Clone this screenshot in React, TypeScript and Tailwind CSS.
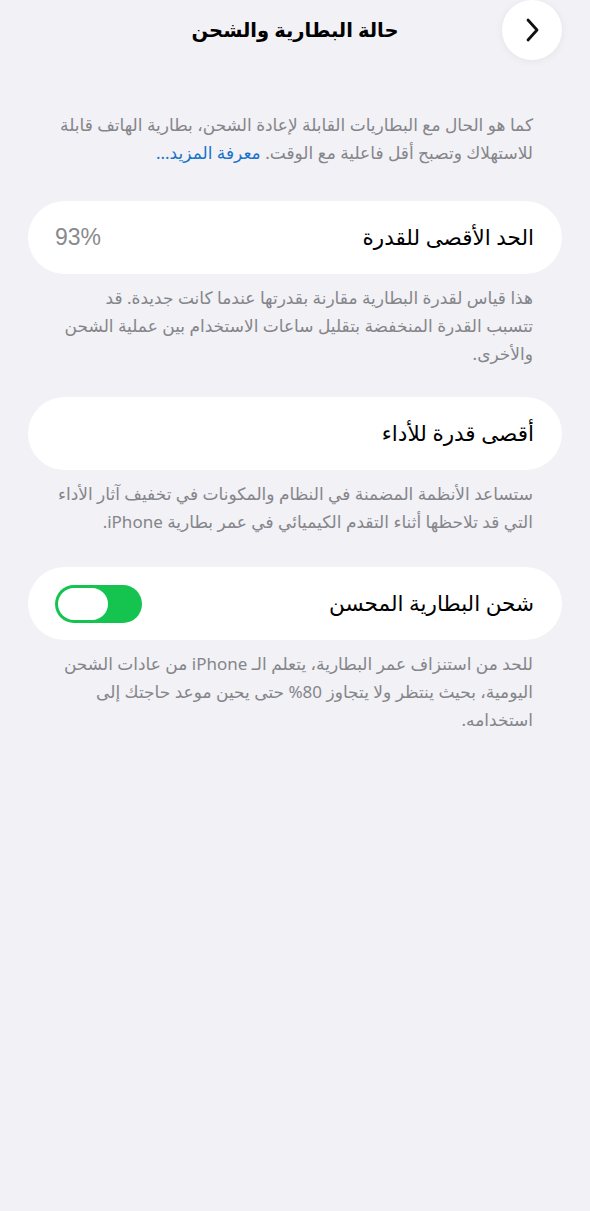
import React from "react";

function Card({ children }: { children: React.ReactNode }) {
  return (
    <div className="mx-[28px] h-[73px] rounded-[37px] bg-white flex items-center justify-between pr-[28px] pl-[27px]">
      {children}
    </div>
  );
}

function Note({ children, wide }: { children: React.ReactNode; wide?: boolean }) {
  return (
    <p
      className={
        wide
          ? "mr-[57px] ml-[28px] mt-[10px] text-[17px] leading-[28px] text-[#85858a]"
          : "mx-[57px] mt-[10px] text-[17px] leading-[28px] text-[#85858a]"
      }
    >
      {children}
    </p>
  );
}

export default function App() {
  return (
    <div
      dir="rtl"
      className="w-[590px] min-h-[1211px] bg-[#f1f1f6] text-black"
      style={{ fontFamily: '"Noto Sans", "DejaVu Sans", sans-serif' }}
    >
      {/* header */}
      <div className="relative h-[60px] flex items-center justify-center">
        <h1 className="text-[19.5px] font-bold">حالة البطارية والشحن</h1>
        <button className="absolute right-[28px] top-0 w-[60px] h-[60px] rounded-full bg-white shadow-[0_1px_8px_rgba(0,0,0,0.06)] flex items-center justify-center">
          <svg width="18" height="26" viewBox="0 0 18 26" fill="none">
            <path d="M5 3l9 10-9 10" stroke="#111" strokeWidth="2.8" strokeLinecap="round" strokeLinejoin="round" />
          </svg>
        </button>
      </div>

      <p className="mx-[57px] mt-[51px] text-[17px] leading-[28px] text-[#85858a]">
        كما هو الحال مع البطاريات القابلة لإعادة الشحن، بطارية الهاتف قابلة للاستهلاك وتصبح أقل فاعلية مع الوقت.{" "}
        <span className="text-[#1a73c9]">معرفة المزيد...</span>
      </p>

      <div className="mt-[34px]">
        <Card>
          <span className="text-[21.5px]">الحد الأقصى للقدرة</span>
          <span className="text-[23px] text-[#8a8a8e]" style={{ fontFamily: '"Liberation Sans", sans-serif' }}>93%</span>
        </Card>
        <Note>
          هذا قياس لقدرة البطارية مقارنة بقدرتها عندما كانت جديدة. قد تتسبب القدرة المنخفضة بتقليل ساعات الاستخدام بين عملية الشحن والأخرى.
        </Note>
      </div>

      <div className="mt-[29px]">
        <Card>
          <span className="text-[21.5px]">أقصى قدرة للأداء</span>
        </Card>
        <Note>
          ستساعد الأنظمة المضمنة في النظام والمكونات في تخفيف آثار الأداء التي قد تلاحظها أثناء التقدم الكيميائي في عمر بطارية iPhone.
        </Note>
      </div>

      <div className="mt-[31px]">
        <Card>
          <span className="text-[21.5px]">شحن البطارية المحسن</span>
          <div className="w-[87px] h-[38px] rounded-full bg-[#14c44f] p-[3px] flex justify-end">
            <div className="w-[50px] h-[32px] rounded-full bg-white" />
          </div>
        </Card>
        <Note wide>
          للحد من استنزاف عمر البطارية، يتعلم الـ iPhone من عادات الشحن اليومية، بحيث ينتظر ولا يتجاوز 80% حتى يحين موعد حاجتك إلى استخدامه.
        </Note>
      </div>
    </div>
  );
}
